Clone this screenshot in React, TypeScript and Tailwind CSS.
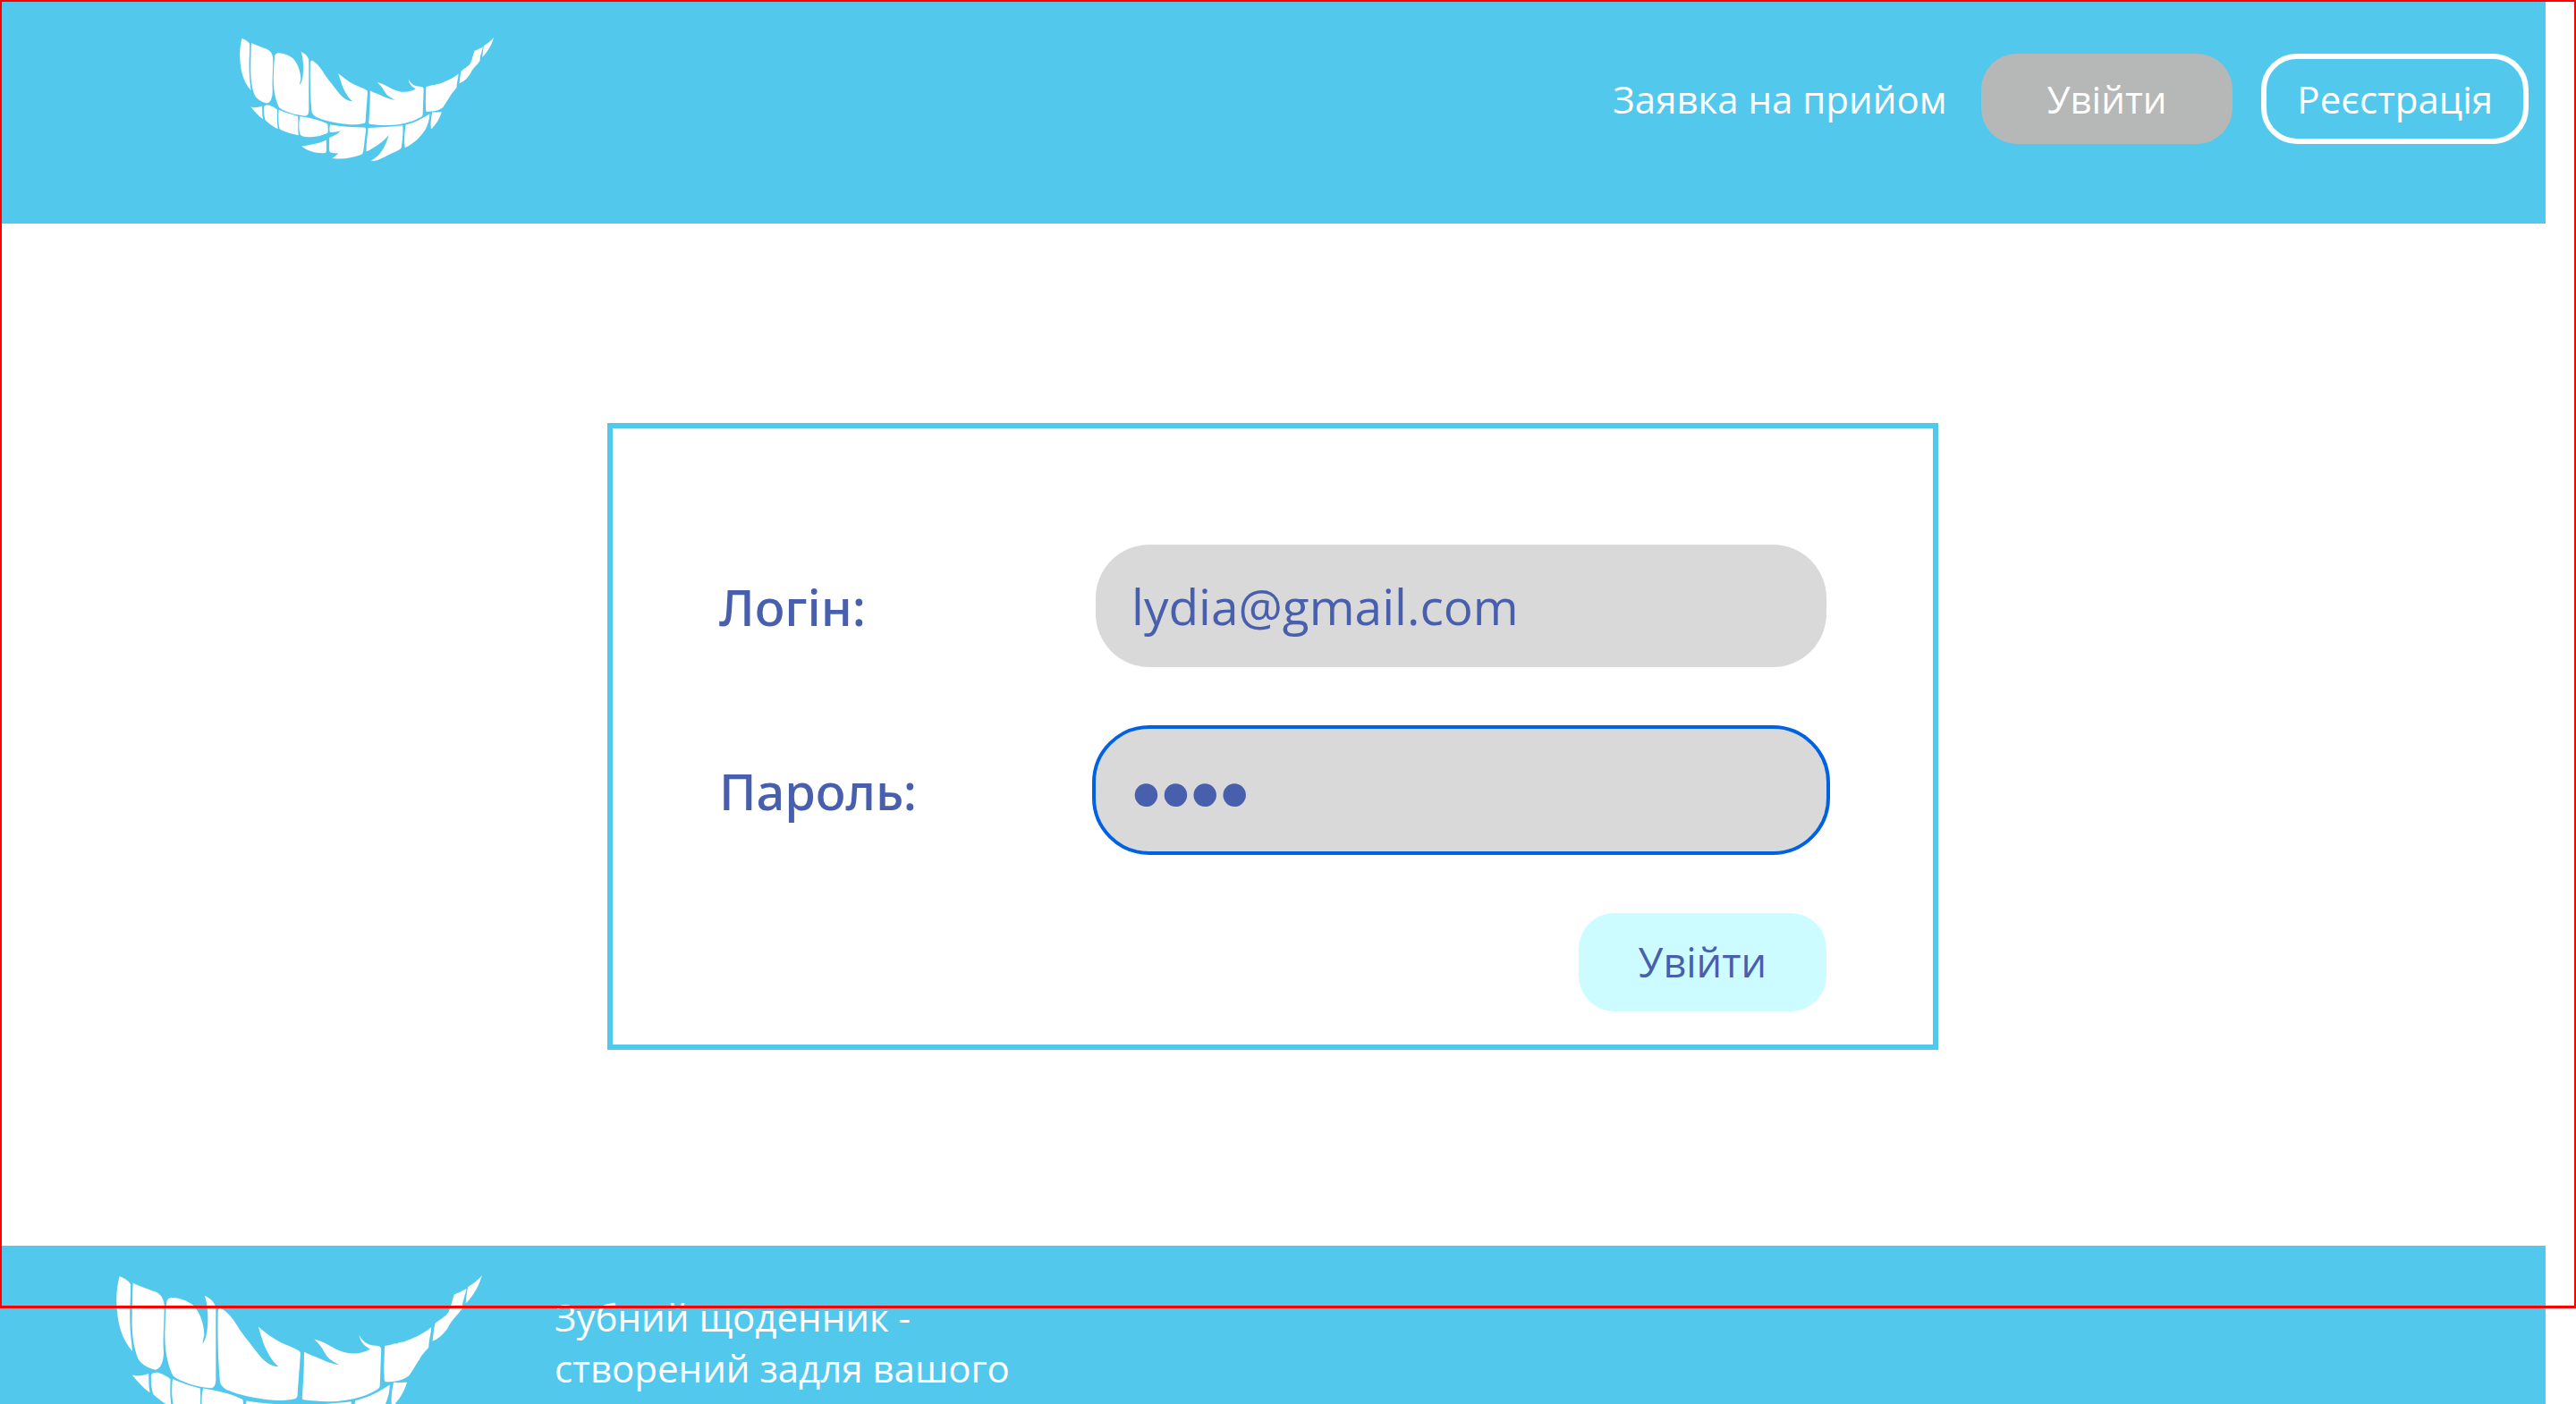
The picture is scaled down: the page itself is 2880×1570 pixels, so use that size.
const upperTeeth = [
  'M69 142C85 147 98 156 106 168C107 210 103 240 104 290C104 330 110 365 112 394C75 350 62 300 59 235C58 200 62 165 69 142Z',
  'M114 164C135 175 165 183 190 194C208 202 217 217 219 235C221 290 214 340 217 390C219 425 208 455 189 456C165 452 142 437 132 420C115 380 110 330 111 280C112 240 112 200 114 164Z',
  'M247 213C272 214 295 223 316 238C336 258 352 295 354 335C354 345 348 355 349 368C365 345 366 310 366 275C365 250 363 225 355 207C372 213 387 227 393 245L393 490C393 508 386 518 374 518C350 514 325 512 300 502C280 495 262 488 249 477C225 430 220 370 222 320C223 290 224 260 227 230C229 218 236 213 247 213Z',
  'M400 262C401 250 406 246 413 251C440 267 458 296 475 324C495 352 515 375 535 402C555 428 577 445 604 446C580 425 560 390 548 350C543 335 540 325 536 312C560 332 585 350 610 364C630 373 655 382 674 393C678 397 678 403 677 415C674 460 670 500 668 540C668 548 665 553 658 554C635 560 600 561 570 557C520 551 465 540 425 521C410 510 406 500 406 485C400 420 399 330 400 262Z',
  'M690 396C710 407 735 414 760 426C777 433 792 438 810 440C785 428 770 418 757 395C748 377 737 365 724 354C750 358 775 375 800 388C830 402 860 406 890 396C898 394 905 390 912 386C895 378 880 365 875 339C884 355 895 368 915 373C925 376 938 374 945 378C950 382 950 390 949 400L945 510C944 518 940 521 930 526C890 550 830 562 780 563C750 564 715 560 688 557C683 555 683 550 684 540C688 490 690 440 690 396Z',
  'M961 376C975 373 985 372 992 368L1005 368L1010 364L1025 362C1055 350 1090 337 1118 313C1117 335 1109 360 1109 382C1098 395 1085 405 1078 422C1065 440 1055 460 1043 476C1025 492 995 497 965 497C959 496 960 490 960 480C957 445 961 410 961 376Z',
  'M1131 300C1150 285 1170 275 1177 260C1187 240 1188 220 1196 202C1210 197 1222 190 1236 183C1235 200 1222 225 1222 250C1210 268 1195 280 1182 300C1170 325 1150 350 1122 360C1125 340 1126 320 1131 300Z',
  'M1289 138C1280 170 1262 205 1234 233C1235 215 1238 195 1241 178C1258 168 1275 155 1289 138Z',
]

const lowerTeeth = [
  'M93 268C105 272 118 270 131 265C132 280 131 295 134 309C118 298 105 283 93 268Z',
  'M137 268C140 262 147 261 155 263C165 266 175 271 182 278C181 300 181 320 184 342C170 336 155 325 142 313C138 300 136 285 137 268Z',
  'M187 277C205 286 228 293 251 299C253 320 250 342 253 363C230 358 208 354 190 343C185 325 184 300 187 277Z',
  'M258 299C285 304 320 309 350 325C352 335 352 345 351 354C347 359 335 360 325 365C300 368 285 371 268 367C260 364 256 358 256 350C254 333 254 315 258 299Z',
  'M263 400C295 395 325 390 346 379L346 415C346 420 344 423 338 423C310 424 285 417 263 400Z',
  'M359 328C398 334 435 337 474 337C479 338 479 343 478 350L471 410C469 422 468 426 460 429C430 440 400 444 366 440C375 434 381 430 386 423C378 424 368 423 360 421C355 418 356 410 356 400L356 371C370 366 383 360 394 348C382 351 370 354 358 353C356 345 356 335 359 328Z',
  'M486 338C525 336 565 335 602 330C604 350 601 380 598 404C590 415 577 417 565 424C545 434 525 446 505 450L496 448C525 432 540 410 556 362C535 385 512 402 480 418C479 395 484 365 486 338Z',
  'M612 327C642 322 668 306 692 291C692 310 686 330 677 345C660 372 635 393 609 405C606 380 608 350 612 327Z',
  'M701 285C712 287 722 284 732 285C726 307 713 327 697 343C694 323 697 303 701 285Z',
]

function SmileLogo({ className }: { className: string }) {
  return (
    <svg viewBox="58 138 1231 602" className={className} fill="#fff" role="img" aria-label="Зубний щоденник">
      {upperTeeth.map((d) => (
        <path key={d} d={d} />
      ))}
      <g transform="translate(-23 86) scale(1.447)">
        {lowerTeeth.map((d) => (
          <path key={d} d={d} />
        ))}
      </g>
    </svg>
  )
}

function Header() {
  return (
    <header className="flex items-start justify-between bg-[#52c8ed] pt-[42px] pr-[19px] pb-[69px] pl-[268px] text-[42px] leading-[57px] text-white">
      <a href="#">
        <SmileLogo className="h-[139px] w-[284px]" />
      </a>
      <nav className="flex items-center gap-8 pt-[18px]">
        <a href="#" className="mr-1.5">Заявка на прийом</a>
        <button type="button" className="rounded-[40px] bg-[#b6b7b7] px-[74px] py-[22px]">Увійти</button>
        <button type="button" className="rounded-[40px] border-6 border-white px-[34px] py-4">Реєстрація</button>
      </nav>
    </header>
  )
}

const labelClass = "font-['Noto_Sans',sans-serif] text-[56px] font-medium"
const fieldClass = 'h-[137px] w-[817px] rounded-[60px] bg-[#d9d9d9] px-10 outline-[#0062e1]'

function LoginForm() {
  return (
    <form
      className="mx-auto flex w-full max-w-[1488px] flex-col gap-[69px] border-6 border-[#52c8ed] px-[119px] pt-[130px] pb-[37px] text-[#485fae]"
      onSubmit={(e) => e.preventDefault()}
    >
      <div className="flex items-center justify-between">
        <label htmlFor="login" className={labelClass}>Логін:</label>
        <input id="login" type="text" defaultValue="lydia@gmail.com" className={`${fieldClass} text-[55px]`} />
      </div>
      <div className="flex items-center justify-between">
        <label htmlFor="password" className={labelClass}>Пароль:</label>
        <input
          id="password"
          type="password"
          defaultValue="1234"
          className={`${fieldClass} pt-2.5 font-['Liberation_Sans',sans-serif] text-[94px] outline-4`}
        />
      </div>
      <button type="submit" className="h-[110px] self-end rounded-[40px] bg-[#ccfcff] px-[67px] text-[45px]">
        Увійти
      </button>
    </form>
  )
}

function Footer() {
  return (
    <footer className="flex grow items-start gap-20 bg-[#52c8ed] pt-[33px] pl-[129px] text-white">
      <SmileLogo className="h-[200px] w-[411px] shrink-0" />
      <p className="max-w-[540px] pt-[18px] text-[42px] leading-[57px]">Зубний щоденник - створений задля вашого</p>
    </footer>
  )
}

export default function App() {
  return (
    <div className="relative h-screen overflow-hidden bg-white font-['Open_Sans','Noto_Sans',sans-serif]">
      <div className="flex min-h-full flex-col pr-[34px]">
        <Header />
        <main className="pt-[223px] pb-[219px]">
          <LoginForm />
        </main>
        <Footer />
      </div>
      <div className="pointer-events-none absolute inset-x-0 top-0 h-[1463px] border-2 border-b-3 border-[#ff0000]" />
    </div>
  )
}
